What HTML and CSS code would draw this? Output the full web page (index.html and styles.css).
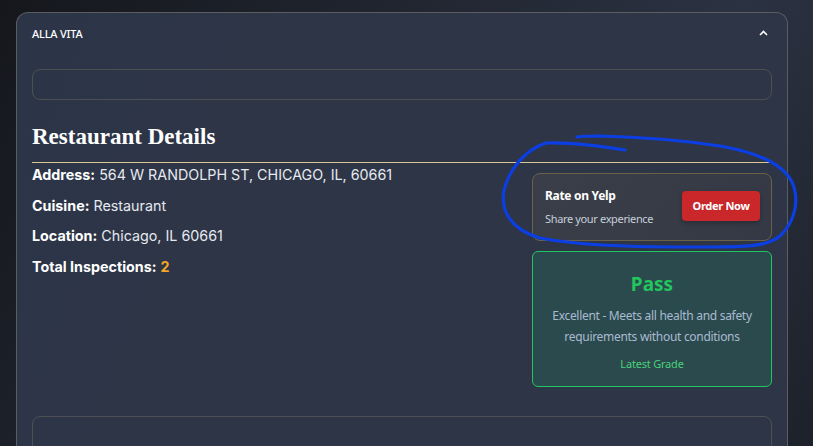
FILE: index.html
```html
<!DOCTYPE html>
<html lang="en">
<head>
<meta charset="utf-8">
<title>Alla Vita</title>
<link rel="stylesheet" href="styles.css">
</head>
<body>
<div class="page">
  <section class="card">
    <header class="card-head">
      <span class="name">ALLA VITA</span>
      <svg class="chev" width="9" height="6" viewBox="0 0 9 6"><polyline points="1,5 4.5,1.5 8,5" fill="none" stroke="#fff" stroke-width="1.6"/></svg>
    </header>
    <div class="card-body">
      <div class="empty-box"></div>
      <h2 class="title">Restaurant Details</h2>
      <div class="details">
        <div class="info">
          <p><b>Address:</b> 564 W RANDOLPH ST, CHICAGO, IL, 60661</p>
          <p><b>Cuisine:</b> Restaurant</p>
          <p><b>Location:</b> Chicago, IL 60661</p>
          <p><b>Total Inspections:</b> <span class="count">2</span></p>
        </div>
        <div class="side">
          <div class="yelp">
            <div class="yelp-text">
              <div class="yelp-title">Rate on Yelp</div>
              <div class="yelp-sub">Share your experience</div>
            </div>
            <button class="order">Order Now</button>
          </div>
          <div class="grade">
            <div class="grade-title">Pass</div>
            <div class="grade-desc">Excellent - Meets all health and safety requirements without conditions</div>
            <div class="grade-label">Latest Grade</div>
          </div>
        </div>
      </div>
      <div class="empty-box bottom"></div>
    </div>
  </section>
</div>
<svg class="scribble" width="813" height="446" viewBox="0 0 813 446">
  <path d="M625 150 C600 146 570 142 546 143 C525 150 510 168 504 190 C500 212 512 230 540 238 C580 246 640 247 700 247 C740 247 765 248 780 236 C795 222 800 200 792 182 C782 163 755 152 720 146 C680 140 640 137 600 136 C590 136 583 136 577 137" fill="none" stroke="#0b3fe3" stroke-width="3.2" stroke-linecap="round" stroke-linejoin="round"/>
</svg>
</body>
</html>
```
FILE: styles.css
```css
* { box-sizing: border-box; }
html, body { margin: 0; height: 100%; }
body {
  background: linear-gradient(120deg, #15171c 0%, #232834 45%, #2b3242 70%, #1d212a 100%);
  overflow: hidden;
  font-family: "Noto Sans", sans-serif;
  color: #fff;
}
.page { padding: 12px 25px 0 16px; }
.card {
  border: 1px solid #5b5d60;
  border-bottom: none;
  border-radius: 12px 12px 0 0;
  background: linear-gradient(110deg, #2c3548, #2e3546 50%, #2d3546);
  height: 440px;
}
.card-head {
  height: 41px;
  display: flex;
  align-items: center;
  justify-content: space-between;
  padding: 0 19px 0 15px;
}
.name { font-size: 11px; font-weight: 500; letter-spacing: -0.2px; color: #fff; }
.chev { display: block; margin-top: -2px; }
.card-body { padding: 15px 15px 0 15px; }
.empty-box {
  height: 31px;
  border: 1px solid #4d5052;
  border-radius: 8px;
}
.title {
  font-family: "Liberation Serif", serif;
  font-weight: bold;
  font-size: 23px;
  margin: 22px 0 0 0;
  padding-bottom: 11px;
  border-bottom: 1px solid #d9c79a;
  line-height: 29px;
}
.details {
  display: grid;
  grid-template-columns: 1fr 240px;
  column-gap: 20px;
}
.info { font-family: "Inter", sans-serif; font-size: 14.3px; padding-top: 2px; }
.info p { margin: 0 0 10.5px; line-height: 20px; color: #e6e9ef; }
.info b { font-weight: 700; color: #fff; }
.count { color: #f5a524; font-weight: 700; }
.side { padding-top: 10px; display: flex; flex-direction: column; gap: 10px; }
.yelp {
  height: 68px;
  border: 1px solid #6a6248;
  border-radius: 8px;
  background: linear-gradient(120deg, #3a3e48, #343945);
  display: flex;
  align-items: center;
  justify-content: space-between;
  padding: 0 11px 0 12px;
}
.yelp-title { font-size: 12px; letter-spacing: -0.3px; font-weight: 700; color: #fff; line-height: 16px; }
.yelp-sub { font-size: 11px; letter-spacing: -0.35px; color: #c7cfdc; margin-top: 8px; line-height: 14px; }
.order {
  font-family: "Noto Sans", sans-serif;
  background: #c9272a;
  color: #fff;
  border: none;
  border-radius: 4px;
  width: 78px;
  height: 30px;
  font-size: 11px;
  letter-spacing: -0.3px;
  font-weight: 700;
  padding: 0;
  margin-top: -3px;
  box-shadow: 0 2px 4px rgba(0,0,0,0.25);
}
.grade {
  height: 136px;
  border: 1px solid #22c55e;
  border-radius: 6px;
  background: #2b4a4d;
  text-align: center;
  padding: 18px 4px 0;
}
.grade-title { font-size: 19px; font-weight: 700; color: #22c55e; line-height: 28px; }
.grade-desc { font-size: 12px; letter-spacing: -0.3px; color: #a9bad0; line-height: 21px; margin-top: 7px; }
.grade-label { font-size: 11px; letter-spacing: -0.2px; color: #4ad07c; margin-top: 9px; line-height: 16px; }
.empty-box.bottom { margin-top: 29px; height: 40px; }
.scribble { position: absolute; left: 0; top: 0; pointer-events: none; }
```
